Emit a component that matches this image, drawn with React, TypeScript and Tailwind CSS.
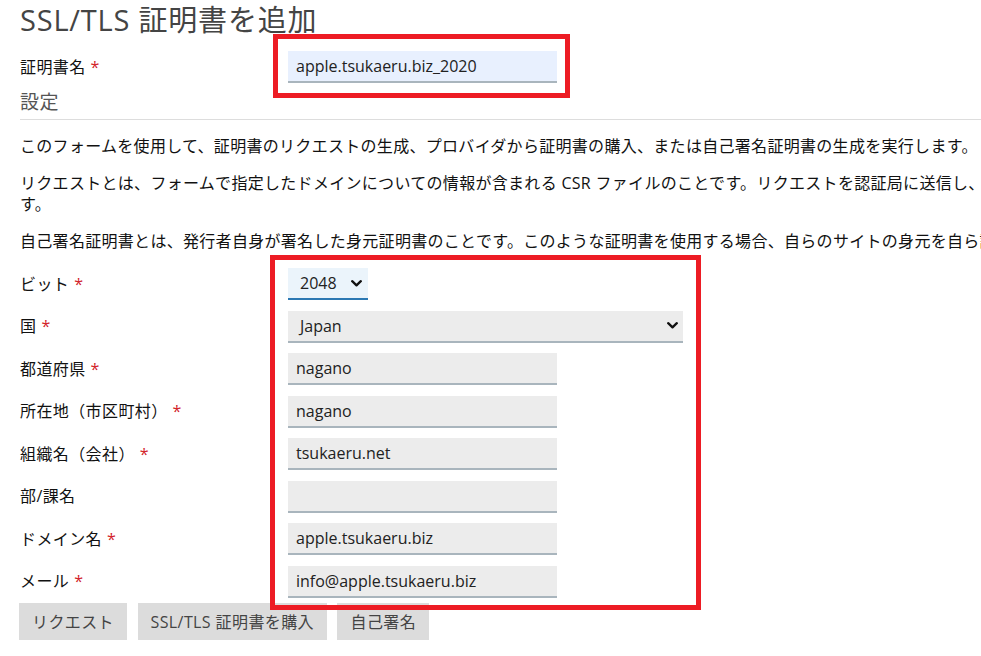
import React from "react";

const Star = () => <span className="text-[#d2232a] ml-[5px]">*</span>;

const Chevron = () => (
  <svg width="11" height="7" viewBox="0 0 11 7" className="shrink-0">
    <path d="M1.2 1.2 L5.5 5.3 L9.8 1.2" fill="none" stroke="#111" strokeWidth="2.3" strokeLinecap="round" strokeLinejoin="round" />
  </svg>
);

function Row({ label, star = true, children }: { label: string; star?: boolean; children: React.ReactNode }) {
  return (
    <div className="flex items-center h-[32px]">
      <div className="w-[268px] shrink-0 text-[16px] leading-[21px] tracking-[0.4px] text-[#111]">
        {label}
        {star && <Star />}
      </div>
      {children}
    </div>
  );
}

function TextBox({ value }: { value: string }) {
  return (
    <div className="w-[269px] h-[32px] bg-[#ececec] border-b-2 border-[#a9b5bd] pl-[8px] flex items-center text-[16px] text-[#222]">
      {value}
    </div>
  );
}

export default function App() {
  const fields: { label: string; value: string; star?: boolean }[] = [
    { label: "都道府県", value: "nagano" },
    { label: "所在地（市区町村）", value: "nagano" },
    { label: "組織名（会社）", value: "tsukaeru.net" },
    { label: "部/課名", value: "", star: false },
    { label: "ドメイン名", value: "apple.tsukaeru.biz" },
    { label: "メール", value: "info@apple.tsukaeru.biz" },
  ];
  return (
    <div className="relative w-[981px] h-[656px] overflow-hidden bg-white font-['Open_Sans','Noto_Sans_CJK_JP',sans-serif] text-[#111]">
      <div className="w-[1242px] pl-[20px]">
        <h2 className="pt-[2px] h-[38px] text-[29px] leading-[36px] tracking-[0.8px] text-[#444] font-normal">
          SSL/TLS 証明書を追加
        </h2>
        <div className="mt-[13px]">
          <Row label="証明書名">
            <div className="w-[269px] h-[32px] bg-[#e8f0fe] border-b-2 border-[#a9b5bd] pl-[8px] flex items-center text-[16px] text-[#222]">
              apple.tsukaeru.biz_2020
            </div>
          </Row>
        </div>
        <div className="mt-[7px] h-[30px] border-b border-[#dddddd] text-[19px] leading-[24px] tracking-[0.5px] text-[#555]">
          設定
        </div>
        <p className="mt-[16px] text-[16px] leading-[21px] tracking-[0.3px]">
          このフォームを使用して、証明書のリクエストの生成、プロバイダから証明書の購入、または自己署名証明書の生成を実行します。
        </p>
        <p className="mt-[16px] text-[16px] leading-[21px] tracking-[0.3px]">
          リクエストとは、フォームで指定したドメインについての情報が含まれる CSR ファイルのことです。リクエストを認証局に送信し、署名済みの証明書を取得できます。
        </p>
        <p className="mt-[16px] text-[16px] leading-[21px] tracking-[0.3px]">
          自己署名証明書とは、発行者自身が署名した身元証明書のことです。このような証明書を使用する場合、自らのサイトの身元を自ら証明します。
        </p>
        <div className="mt-[16px] flex flex-col gap-[10.5px]">
          <Row label="ビット">
            <div className="w-[80px] h-[32px] bg-[#ebf4fb] border-b-2 border-[#2b78b3] pl-[12px] pr-[6px] flex items-center justify-between text-[16px] text-[#222]">
              <span>2048</span>
              <Chevron />
            </div>
          </Row>
          <Row label="国">
            <div className="w-[395px] h-[32px] bg-[#ececec] border-b-2 border-[#a9b5bd] pl-[12px] pr-[5px] flex items-center justify-between text-[16px] text-[#222]">
              <span>Japan</span>
              <Chevron />
            </div>
          </Row>
          {fields.map((f) => (
            <Row key={f.label} label={f.label} star={f.star !== false}>
              <TextBox value={f.value} />
            </Row>
          ))}
        </div>
        <div className="mt-[5.5px] flex gap-[10.5px] -ml-[1px]">
          {["リクエスト", "SSL/TLS 証明書を購入", "自己署名"].map((b) => (
            <button key={b} className="h-[37px] px-[13px] bg-[#dcdcdc] text-[#444] text-[16px] tracking-[0.4px]">
              {b}
            </button>
          ))}
        </div>
      </div>
      <div className="absolute left-[273px] top-[34px] w-[297px] h-[64px] border-[5px] border-[#ed1c24] pointer-events-none" />
      <div className="absolute left-[270px] top-[255px] w-[431px] h-[355px] border-[5px] border-[#ed1c24] pointer-events-none" />
    </div>
  );
}
